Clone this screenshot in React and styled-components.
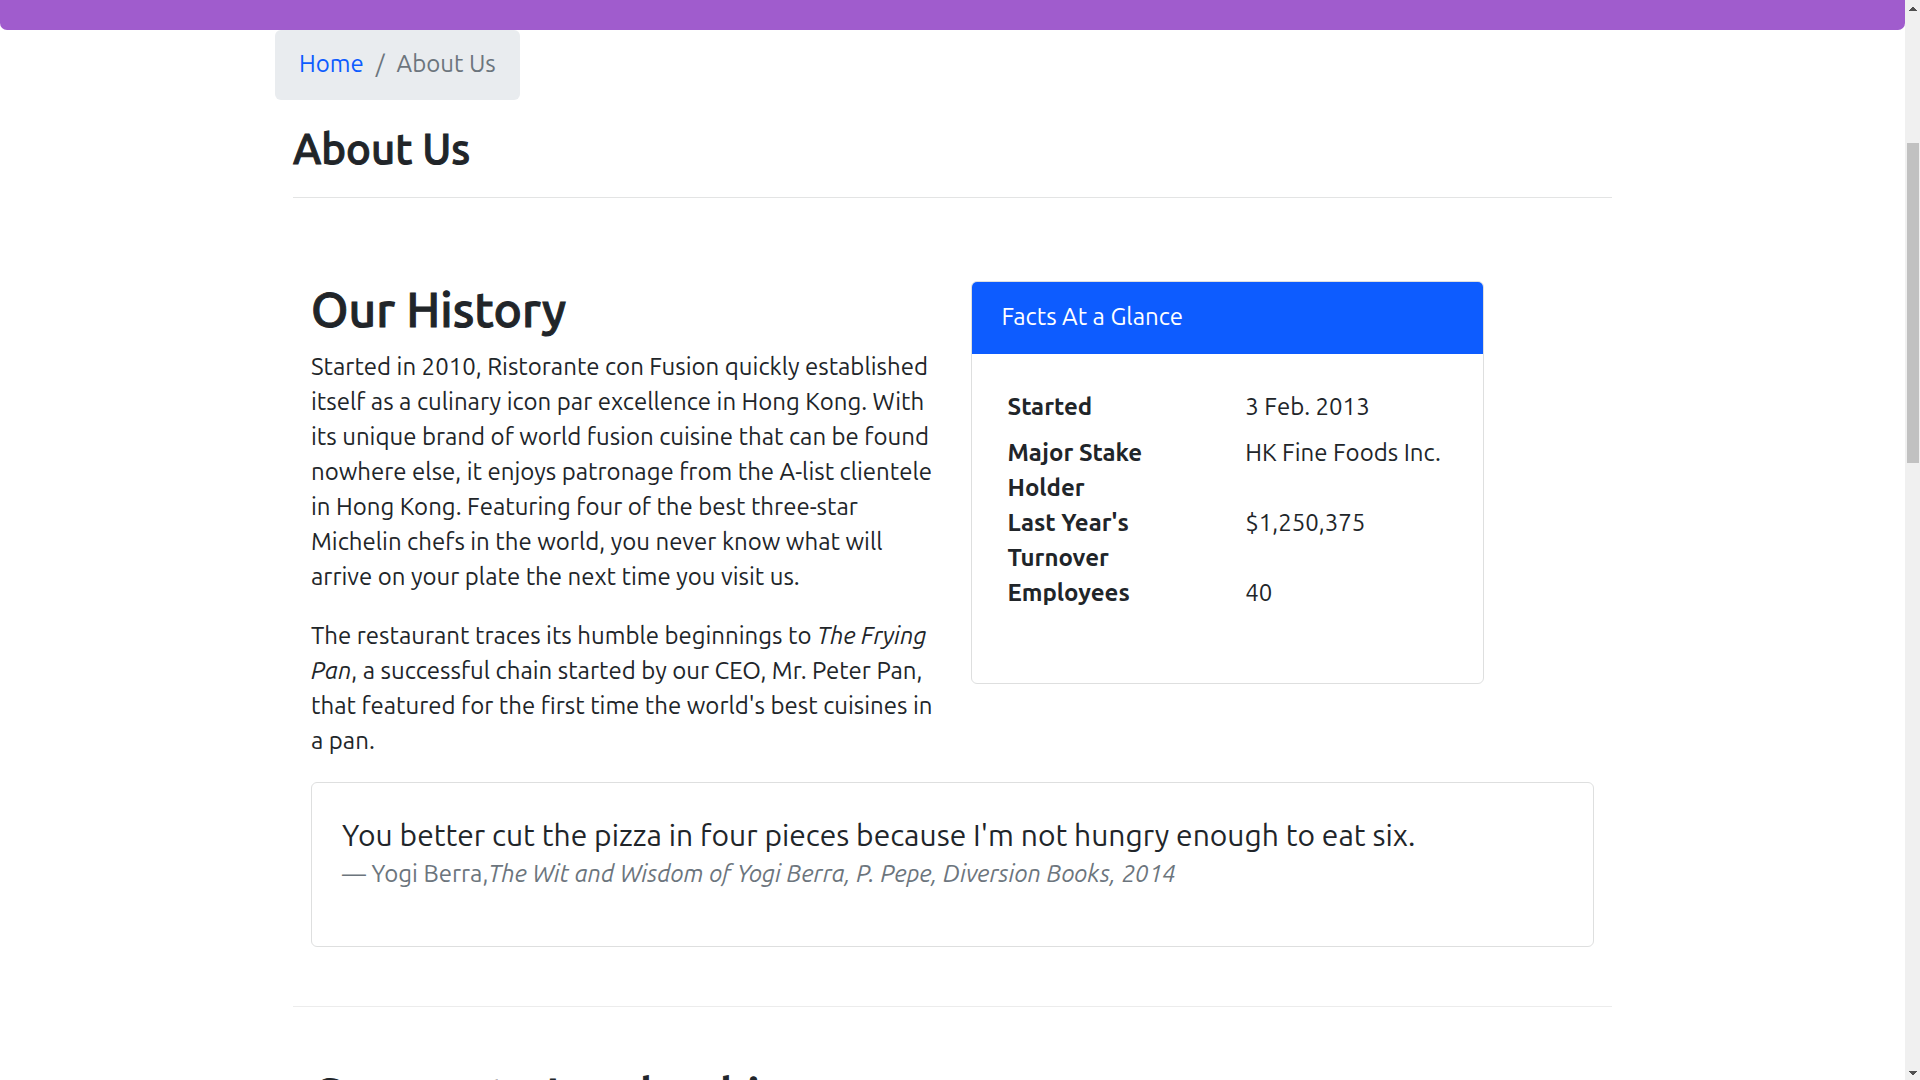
import React from 'react';
import styled, { createGlobalStyle, css } from 'styled-components';

const GlobalStyle = createGlobalStyle`
  *, *::before, *::after { box-sizing: border-box; }
  body {
    margin: 0;
    background: #fff;
    color: #212529;
    font-family: Ubuntu, "Noto Sans", "Open Sans", sans-serif;
    font-size: 24px;
    line-height: 35px;
  }
`;

// Medium-weight headings: the regular face with a thin outline.
const headingFace = css`
  font-weight: 500;
  -webkit-text-stroke: 1px currentColor;
`;

const Viewport = styled.div`
  display: flex;
  height: 100vh;
  overflow: hidden;
`;

const Page = styled.div`
  flex: 1;
  min-width: 0;
`;

const Banner = styled.header`
  height: 30px;
  background: #a05ccd;
  border-radius: 0 0 7px 7px;
`;

const Container = styled.main`
  max-width: 1319px;
  margin: 0 auto;
`;

const Breadcrumb = styled.nav`
  width: fit-content;
  margin: 0 0 24px -18px;
  padding: 16px 24px 19px;
  background: #e9ecef;
  border-radius: 6px;
  color: #6c757d;
`;

const Crumbs = styled.ol`
  display: flex;
  gap: 12px;
  margin: 0;
  padding: 0;
  list-style: none;
`;

const Crumb = styled.li`
  display: flex;
  gap: 12px;

  & + &::before { content: "/"; }
`;

const CrumbLink = styled.a`
  color: #0d5cff;
  text-decoration: none;
`;

const PageTitle = styled.h1`
  ${headingFace}
  margin: 0;
  padding-bottom: 24px;
  border-bottom: 1px solid #e3e4e4;
  font-size: 42px;
  line-height: 49px;
`;

const Section = styled.section`
  padding: 60px 18px 59px;
  border-bottom: 1px solid #ececec;
`;

const FirstSection = styled(Section)`
  margin-top: 23px;
`;

const SectionTitle = styled.h2`
  ${headingFace}
  margin: 0 0 12px;
  font-size: 48px;
  line-height: 56px;
`;

const Columns = styled.div`
  display: grid;
  grid-template-columns: repeat(12, minmax(0, 1fr));
  column-gap: 36px;
  align-items: start;
`;

const Story = styled.div`
  grid-column: span 6;
`;

const Paragraph = styled.p`
  margin: 0 0 24px;
`;

const Card = styled.div`
  border: 1px solid #dedfdf;
  border-radius: 6px;
  overflow: hidden;
`;

const FactsCard = styled(Card)`
  grid-column: span 5;
`;

const CardHeader = styled.h3`
  margin: 0;
  padding: 17px 30px 20px;
  background: #0d5cff;
  color: #fff;
  font-size: 24px;
  font-weight: 400;
  line-height: 35px;
`;

const Facts = styled.dl`
  display: grid;
  grid-template-columns: 1fr 1fr;
  column-gap: 36px;
  margin: 0;
  padding: 35px 36px 73px;
`;

const Term = styled.dt`
  font-weight: 700;
`;

const Detail = styled.dd`
  min-height: 35px;
  margin: 0;
  padding-bottom: ${(p) => (p.$spaced ? '11px' : '0')};
`;

const QuoteCard = styled(Card)`
  padding: 31px 30px 55px;
`;

const Quote = styled.blockquote`
  margin: 0;
  font-size: 30px;
  line-height: 42px;
`;

const QuoteSource = styled.footer`
  color: #6c757d;
  font-size: 24px;
  line-height: 35px;
`;

const ScrollTrack = styled.div`
  display: flex;
  flex-direction: column;
  justify-content: space-between;
  flex: 0 0 15px;
  padding: 7px 1px 5px 2px;
  background: #f0f0f0;
`;

const ScrollThumb = styled.div`
  flex: 0 0 30%;
  margin: 132px 0 auto;
  background: #c1c1c1;
`;

const ScrollArrow = styled.svg`
  display: block;
  width: 8px;
  height: 4px;
  margin-left: 2px;
  fill: #505050;
`;

const facts = [
  { term: 'Started', detail: '3 Feb. 2013' },
  { term: 'Major Stake Holder', detail: 'HK Fine Foods Inc.' },
  { term: "Last Year's Turnover", detail: '$1,250,375' },
  { term: 'Employees', detail: '40' },
];

export default function App() {
  return (
    <>
      <GlobalStyle />
      <Viewport>
        <Page>
          <Banner />
          <Container>
            <Breadcrumb aria-label="Breadcrumb">
              <Crumbs>
                <Crumb><CrumbLink href="#home">Home</CrumbLink></Crumb>
                <Crumb aria-current="page">About Us</Crumb>
              </Crumbs>
            </Breadcrumb>
            <PageTitle>About Us</PageTitle>
            <FirstSection>
              <Columns>
                <Story>
                  <SectionTitle>Our History</SectionTitle>
                  <Paragraph>
                    Started in 2010, Ristorante con Fusion quickly established itself as a
                    culinary icon par excellence in Hong Kong. With its unique brand of world
                    fusion cuisine that can be found nowhere else, it enjoys patronage from the
                    A-list clientele in Hong Kong. Featuring four of the best three-star Michelin
                    chefs in the world, you never know what will arrive on your plate the next
                    time you visit us.
                  </Paragraph>
                  <Paragraph>
                    The restaurant traces its humble beginnings to <em>The Frying Pan</em>, a
                    successful chain started by our CEO, Mr. Peter Pan, that featured for the
                    first time the world's best cuisines in a pan.
                  </Paragraph>
                </Story>
                <FactsCard>
                  <CardHeader>Facts At a Glance</CardHeader>
                  <Facts>
                    {facts.map(({ term, detail }, i) => (
                      <React.Fragment key={term}>
                        <Term>{term}</Term>
                        <Detail $spaced={i === 0}>{detail}</Detail>
                      </React.Fragment>
                    ))}
                  </Facts>
                </FactsCard>
              </Columns>
              <QuoteCard>
                <Quote>
                  You better cut the pizza in four pieces because I'm not hungry enough to eat six.
                  <QuoteSource>
                    — Yogi Berra,<cite>The Wit and Wisdom of Yogi Berra, P. Pepe, Diversion Books, 2014</cite>
                  </QuoteSource>
                </Quote>
              </QuoteCard>
            </FirstSection>
            <Section>
              <SectionTitle>Corporate Leadership</SectionTitle>
            </Section>
          </Container>
        </Page>
        <ScrollTrack aria-hidden="true">
          <ScrollArrow viewBox="0 0 8 4"><path d="M3 0h2v1h1v1h1v1h1v1H0V3h1V2h1V1h1z" /></ScrollArrow>
          <ScrollThumb />
          <ScrollArrow viewBox="0 0 8 4"><path d="M0 0h8v1H7v1H6v1H5v1H3V3H2V2H1V1H0z" /></ScrollArrow>
        </ScrollTrack>
      </Viewport>
    </>
  );
}
